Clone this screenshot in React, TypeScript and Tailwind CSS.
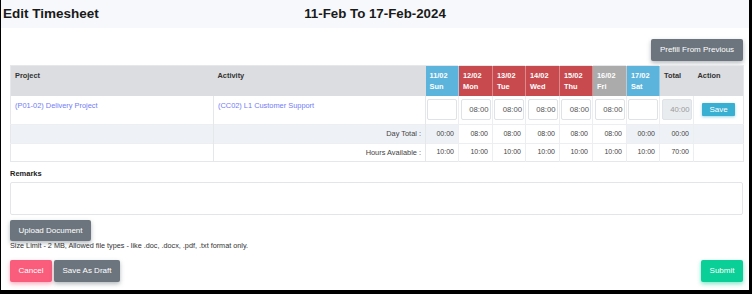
import React from "react";

const days = [
  { d: "11/02", n: "Sun", bg: "bg-[#5cb4dc]", v: "", dt: "00:00", hl: true },
  { d: "12/02", n: "Mon", bg: "bg-[#c94a4e]", v: "08:00", dt: "08:00", hl: false },
  { d: "13/02", n: "Tue", bg: "bg-[#c94a4e]", v: "08:00", dt: "08:00", hl: false },
  { d: "14/02", n: "Wed", bg: "bg-[#c94a4e]", v: "08:00", dt: "08:00", hl: false },
  { d: "15/02", n: "Thu", bg: "bg-[#c94a4e]", v: "08:00", dt: "08:00", hl: false },
  { d: "16/02", n: "Fri", bg: "bg-[#ababab]", v: "08:00", dt: "08:00", hl: false },
  { d: "17/02", n: "Sat", bg: "bg-[#5cb4dc]", v: "", dt: "00:00", hl: true },
];

const colW = ["w-[33px]", "w-[34px]", "w-[33px]", "w-[34px]", "w-[33px]", "w-[34px]", "w-[33px]"];

export default function App() {
  return (
    <div className="w-[752px] h-[294px] bg-black">
      <div className="ml-px w-[748px] h-[290px] bg-white font-['Liberation_Sans',Arial,sans-serif] text-[#333] flex flex-col">
        <div className="h-[28px] bg-[#f7f8fb] grid grid-cols-[1fr_auto_1fr] items-center text-[#1a1a1a] font-bold">
          <div className="pl-[2px] text-[13.5px]">Edit Timesheet</div>
          <div className="text-[13.3px]">11-Feb To 17-Feb-2024</div>
          <div />
        </div>
        <div className="pl-[9px] pr-[6px] flex flex-col">
          <div className="flex justify-end mt-[11px]">
            <div className="w-[92px] h-[22px] bg-[#6c757d] rounded-[2px] text-white text-[8px] flex items-center justify-center shadow-[0_2px_4px_rgba(108,117,125,0.5)]">
              Prefill From Previous
            </div>
          </div>
          <table className="mt-[4px] w-[733px] table-fixed border-collapse border border-[#e6e7ea] text-[7.4px]">
            <colgroup>
              <col className="w-[203px]" />
              <col className="w-[212px]" />
              {colW.map((w, i) => (
                <col key={i} className={w} />
              ))}
              <col className="w-[34px]" />
              <col className="w-[50px]" />
            </colgroup>
            <thead>
              <tr className="h-[30px] bg-[#dcdde1]">
                <th className="align-top text-left font-bold pl-[4px] pt-[5px] leading-[10px] text-[#333]">Project</th>
                <th className="align-top text-left font-bold pl-[4px] pt-[5px] leading-[10px] text-[#333]">Activity</th>
                {days.map((d) => (
                  <th
                    key={d.d}
                    className={`${d.bg} align-top text-left font-bold pl-[4px] pt-[4px] leading-[11px] text-white border-r border-[rgba(255,255,255,0.35)]`}
                  >
                    {d.d}
                    <br />
                    {d.n}
                  </th>
                ))}
                <th className="align-top text-left font-bold pl-[4px] pt-[5px] leading-[10px] text-[#333]">Total</th>
                <th className="align-top text-left font-bold pl-[4px] pt-[5px] leading-[10px] text-[#333]">Action</th>
              </tr>
            </thead>
            <tbody>
              <tr className="h-[29px] border-b border-[#eceef1]">
                <td className="align-top pl-[4px] pt-[4px] text-[#727cf5] border-r border-[#e6e7ea]">(P01-02) Delivery Project</td>
                <td className="align-top pl-[4px] pt-[4px] text-[#727cf5] border-r border-[#e6e7ea]">(CC02) L1 Customer Support</td>
                {days.map((d) => (
                  <td key={d.d} className="border-r border-[#eceef1]">
                    <div className="mx-auto w-[30px] h-[21px] border border-[#dfe2e6] rounded-[2px] text-right pr-[1px] text-[7.7px] leading-[19px] text-[#555]">
                      {d.v}
                    </div>
                  </td>
                ))}
                <td className="border-r border-[#eceef1]">
                  <div className="mx-auto w-[30px] h-[21px] border border-[#dfe2e6] bg-[#e9ecef] rounded-[2px] text-right pr-[1px] text-[7.7px] leading-[19px] text-[#9a9a9a]">
                    40:00
                  </div>
                </td>
                <td>
                  <div className="mx-auto w-[33px] h-[13px] bg-[#39afd1] rounded-[1px] text-white text-[8px] leading-[13px] text-center shadow-[0_1px_3px_rgba(57,175,209,0.5)]">
                    Save
                  </div>
                </td>
              </tr>
              <tr className="h-[19px] bg-[#eef2f7] text-[#444] border-b border-[#eceef1]">
                <td className="border-r border-[#e6e7ea]" />
                <td className="text-right pr-[4px] border-r border-[#e6e7ea]">Day Total :</td>
                {days.map((d) => (
                  <td key={d.d} className={`text-right pr-[4px] text-[7px] border-r border-[#eceef1] ${d.hl ? "bg-[#eef2f7]" : "bg-white"}`}>
                    {d.dt}
                  </td>
                ))}
                <td className="text-right pr-[4px] text-[7px] border-r border-[#eceef1]">00:00</td>
                <td />
              </tr>
              <tr className="h-[18px] bg-white text-[#444]">
                <td className="border-r border-[#e6e7ea]" />
                <td className="text-right pr-[4px] border-r border-[#e6e7ea]">Hours Available :</td>
                {days.map((d) => (
                  <td key={d.d} className="text-right pr-[4px] text-[7px] border-r border-[#eceef1]">
                    10:00
                  </td>
                ))}
                <td className="text-right pr-[4px] text-[7px] border-r border-[#eceef1]">70:00</td>
                <td />
              </tr>
            </tbody>
          </table>
          <div className="mt-[7px] text-[7.5px] font-bold leading-[10px] text-[#222]">Remarks</div>
          <div className="mt-[3px] h-[33px] border border-[#e3e5e8] rounded-[2px]" />
          <div className="mt-[5px] w-[81px] h-[21px] bg-[#6c757d] rounded-[2px] text-white text-[8px] flex items-center justify-center shadow-[0_2px_4px_rgba(108,117,125,0.5)]">
            Upload Document
          </div>
          <div className="text-[7.25px] leading-[10px] text-[#333]">
            Size Limit - 2 MB, Allowed file types - like .doc, .docx, .pdf, .txt format only.
          </div>
          <div className="mt-[9px] flex items-center">
            <div className="w-[42px] h-[22px] bg-[#fa5c7c] rounded-[2px] text-white text-[8px] flex items-center justify-center shadow-[0_2px_4px_rgba(250,92,124,0.5)]">
              Cancel
            </div>
            <div className="ml-[2px] w-[66px] h-[22px] bg-[#6c757d] rounded-[2px] text-white text-[8px] flex items-center justify-center shadow-[0_2px_4px_rgba(108,117,125,0.5)]">
              Save As Draft
            </div>
            <div className="ml-auto w-[42px] h-[22px] bg-[#0acf97] rounded-[2px] text-white text-[8px] flex items-center justify-center shadow-[0_2px_4px_rgba(10,207,151,0.5)]">
              Submit
            </div>
          </div>
        </div>
      </div>
    </div>
  );
}
